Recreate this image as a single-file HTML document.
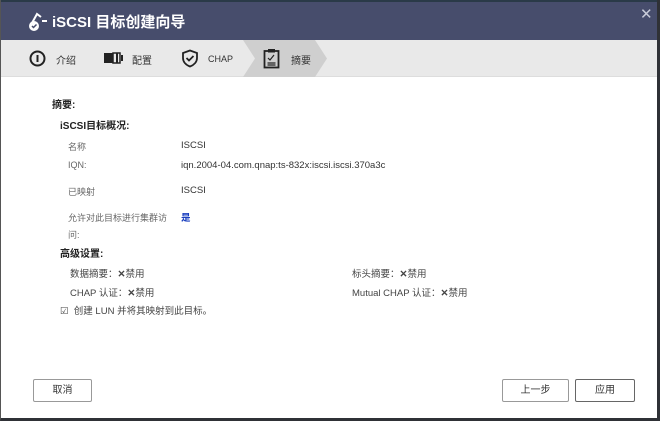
<!DOCTYPE html>
<html><head><meta charset="utf-8"><style>
*{margin:0;padding:0;box-sizing:border-box}
body{width:660px;height:421px;overflow:hidden;background:#fff;font-family:"Liberation Sans","Noto Sans CJK SC",sans-serif;color:#333;position:relative}
.frame{position:absolute;left:0;top:0;width:660px;height:421px;border-right:3px solid #2f3136;border-bottom:3px solid #2f3136;border-left:1px solid #555}
.title{position:absolute;left:0;top:0;width:660px;height:40px;background:#474d6c;border-top:2px solid #2a3a48}
.title .t{position:absolute;left:52px;top:9px;color:#fff;font-size:15px;font-weight:bold}
.close{position:absolute;left:640px;top:3px;color:#c8cbd8;font-size:15px}
.steps{position:absolute;left:0;top:40px;width:657px;height:37px;background:#e9e9e9;border-bottom:1px solid #ddd}
.st{position:absolute;top:12px;font-size:10px;color:#333}
.small{font-size:9.5px;position:absolute;color:#333}
.lbl{color:#666;font-size:9px;position:absolute}
.b{font-weight:bold;font-size:10px;position:absolute;color:#222}
.btn{position:absolute;top:379px;height:23px;border:1px solid #999;border-radius:2px;background:#fff;font-size:10px;text-align:center;line-height:21px;color:#333}
</style></head><body>
<div class="title">
<svg style="position:absolute;left:26px;top:7px" width="24" height="24" viewBox="0 0 24 24" fill="none" stroke="#fff" stroke-width="2"><path d="M6 14 L11 5 L15 8"/><circle cx="8" cy="17" r="4" fill="#fff"/><path d="M6 17l1.5 1.5 3-3" stroke="#474d6c" stroke-width="1.5"/><path d="M16 12h5"/></svg>
<div class="t">iSCSI 目标创建向导</div>
<div class="close">✕</div>
</div>
<div class="steps">
<svg style="position:absolute;left:243px;top:0" width="85" height="37"><polygon points="0,0 72,0 84,18.5 72,37 0,37 12,18.5" fill="#cfcfcf"/></svg>
<svg style="position:absolute;left:29px;top:10px" width="17" height="17"><circle cx="8.5" cy="8.5" r="7" fill="none" stroke="#222" stroke-width="2"/><rect x="7.5" y="5" width="2" height="7" fill="#222"/></svg>
<div class="st" style="left:56px">介绍</div>
<svg style="position:absolute;left:104px;top:12px" width="20" height="12"><rect x="0" y="1" width="9" height="10" fill="#222"/><rect x="9" y="1" width="7" height="10" fill="none" stroke="#222" stroke-width="1.5"/><rect x="12" y="1" width="2" height="10" fill="#222"/><rect x="17" y="3" width="2" height="6" fill="#222"/></svg>
<div class="st" style="left:132px">配置</div>
<svg style="position:absolute;left:181px;top:9px" width="18" height="19"><path d="M9 1.5 L16 4 V9 C16 13 13 16 9 17.5 C5 16 2 13 2 9 V4 Z" fill="none" stroke="#222" stroke-width="1.8"/><path d="M5.5 9l2.5 2.5 4.5-4.5" fill="none" stroke="#222" stroke-width="1.8"/></svg>
<div class="st" style="left:208px;font-size:9px;top:14px">CHAP</div>
<svg style="position:absolute;left:263px;top:8px" width="17" height="21"><rect x="1.5" y="3" width="14" height="16.5" fill="none" stroke="#222" stroke-width="1.8"/><rect x="5" y="1" width="7" height="3.5" fill="#222"/><path d="M5 10l2 2 4-5M4.5 15h8M4.5 17h8" fill="none" stroke="#222" stroke-width="1.2"/></svg>
<div class="st" style="left:291px">摘要</div>
</div>
<div class="b" style="left:52px;top:96px">摘要:</div>
<div class="b" style="left:60px;top:117px">iSCSI目标概况:</div>
<div class="lbl" style="left:68px;top:140px">名称</div><div class="small" style="left:181px;top:140px">ISCSI</div>
<div class="lbl" style="left:68px;top:160px">IQN:</div><div class="small" style="left:181px;top:160px">iqn.2004-04.com.qnap:ts-832x:iscsi.iscsi.370a3c</div>
<div class="lbl" style="left:68px;top:185px">已映射</div><div class="small" style="left:181px;top:185px">ISCSI</div>
<div class="lbl" style="left:68px;top:210px;width:110px;line-height:17px">允许对此目标进行集群访问:</div><div class="small" style="left:181px;top:210px;color:#1a3fbf;font-weight:bold">是</div>
<div class="b" style="left:60px;top:245px">高级设置:</div>
<div class="small" style="left:70px;top:266px;color:#444">数据摘要：<b>✕</b>禁用</div>
<div class="small" style="left:70px;top:285px;color:#444">CHAP 认证：<b>✕</b>禁用</div>
<div class="small" style="left:352px;top:266px;color:#444">标头摘要：<b>✕</b>禁用</div>
<div class="small" style="left:352px;top:285px;color:#444">Mutual CHAP 认证：<b>✕</b>禁用</div>
<div class="small" style="left:60px;top:303px;color:#444">☑ &nbsp;创建 LUN 并将其映射到此目标。</div>
<div class="btn" style="left:33px;width:59px">取消</div>
<div class="btn" style="left:502px;width:67px">上一步</div>
<div class="btn" style="left:575px;width:60px;border-color:#666">应用</div>
<div class="frame"></div>
</body></html>
